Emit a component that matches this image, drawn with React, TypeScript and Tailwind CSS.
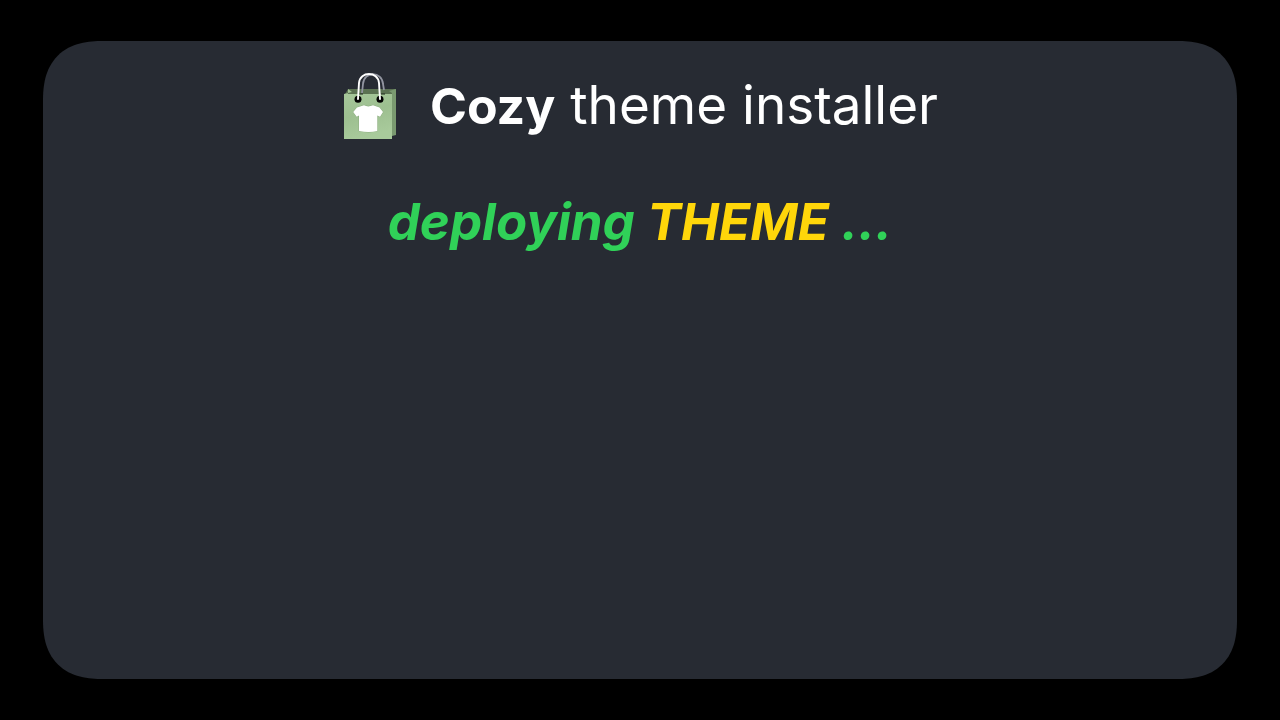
export default function App() {
  return (
    <main className="flex min-h-screen flex-col bg-black px-[43px] py-[41px] font-['Inter',sans-serif]">
      <section className="flex grow flex-col items-center rounded-[60px] bg-[#272b33] pt-7 [corner-shape:superellipse(1.3)]">
        <header className="flex items-center gap-8 text-white">
          <svg width="56" height="72" viewBox="0 -2 56 72" aria-hidden="true">
            <defs>
              <linearGradient id="front" x1="0" y1="0" x2="0.300" y2="1">
                <stop offset="0" stopColor="#a6c79a" />
                <stop offset="0.500" stopColor="#9dbf90" />
                <stop offset="1" stopColor="#a8ca9b" />
              </linearGradient>
            </defs>
            <path d="M6 17H54L50 24H2z" fill="#5b7252" />
            <path d="M6 17L10 20L2 22H6z" fill="#a3c495" />
            <path d="M54 17L47 19L50 21V64L54 63z" fill="#7a9a70" />
            <path d="M20 21L21 12C22 -1 40 -1 41 12L42 18" fill="none" stroke="#9295a0" strokeWidth="1.800" />
            <path d="M2 22H50V67H2z" fill="url(#front)" />
            <path d="M17 22H21M39 22H43" stroke="#1d251b" strokeWidth="1" />
            <circle cx="16" cy="27.300" r="3.500" fill="#000" />
            <circle cx="38" cy="27.300" r="3.500" fill="#000" />
            <path d="M16 27L17 11C18 -1 36 -1 37 11L38 27" fill="none" stroke="#fff" strokeWidth="1.900" strokeLinecap="round" />
            <path d="M22 33.300Q26 35.500 31 33.300L37.500 35.500L41 40L38 44.800L35.300 43.500V59Q27 61.200 17 59V43.500L14.700 44.800L11.200 40L15 35.500z" fill="#fff" stroke="#7c9970" strokeOpacity="0.500" strokeWidth="1" paintOrder="stroke" />
          </svg>
          <h1 className="text-[53px] leading-[72px] font-normal">
            <b className="text-[50px] font-bold">Cozy</b> theme installer
          </h1>
        </header>
        <p className="mt-11 text-[51px] leading-[72px] font-bold italic text-[#30d158]">
          deploying <span className="text-[#ffd60a]">THEME</span> ...
        </p>
      </section>
    </main>
  );
}
